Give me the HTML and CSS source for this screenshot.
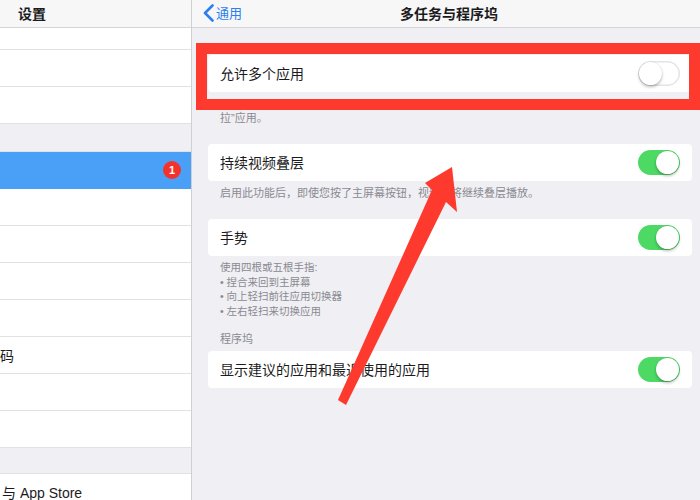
FILE: index.html
```
<!DOCTYPE html>
<html lang="zh-CN">
<head>
<meta charset="utf-8">
<title>多任务与程序坞</title>
<link rel="stylesheet" href="styles.css">
</head>
<body>
<div class="app">
  <aside class="sidebar">
    <div class="nav-header"><span class="nav-title">设置</span></div>
    <div class="row row-short"></div>
    <div class="row"></div>
    <div class="row"></div>
    <div class="group-gap"></div>
    <div class="row selected"><span class="badge">1</span></div>
    <div class="row"></div>
    <div class="row"></div>
    <div class="row"></div>
    <div class="row"></div>
    <div class="row"><span class="row-label row-label-cut">码</span></div>
    <div class="row"></div>
    <div class="row"></div>
    <div class="group-gap group-gap-last"></div>
    <div class="row"><span class="row-label">与 App Store</span></div>
  </aside>

  <main class="detail">
    <header class="detail-header">
      <a class="back">
        <svg class="chevron" width="11" height="18" viewBox="0 0 11 18"><path d="M9.5 1.5 L2 9 L9.5 16.5" fill="none" stroke="#2d7ff0" stroke-width="2.6" stroke-linecap="round" stroke-linejoin="round"/></svg>
        <span>通用</span>
      </a>
      <h1 class="detail-title">多任务与程序坞</h1>
      <span></span>
    </header>

    <section class="content">
      <div class="card card-first">
        <span class="card-label">允许多个应用</span>
        <span class="toggle"></span>
      </div>
      <p class="footer footer-first">拉”应用。</p>

      <div class="card">
        <span class="card-label">持续视频叠层</span>
        <span class="toggle on"></span>
      </div>
      <p class="footer">启用此功能后，即使您按了主屏幕按钮，视频也将继续叠层播放。</p>

      <div class="card">
        <span class="card-label">手势</span>
        <span class="toggle on"></span>
      </div>
      <div class="footer footer-list">
        <div>使用四根或五根手指:</div>
        <div>• 捏合来回到主屏幕</div>
        <div>• 向上轻扫前往应用切换器</div>
        <div>• 左右轻扫来切换应用</div>
      </div>

      <div class="section-title">程序坞</div>
      <div class="card">
        <span class="card-label">显示建议的应用和最近使用的应用</span>
        <span class="toggle on"></span>
      </div>
    </section>
  </main>

  <div class="highlight-box"></div>
  <svg class="arrow" width="700" height="500" viewBox="0 0 700 500">
    <polygon points="452,167 457,212 446,202 346,405 338,400 432,190 425,183" fill="#fd3a2d"/>
  </svg>
</div>
</body>
</html>
```

FILE: styles.css
```
* {
  box-sizing: border-box;
}

html, body {
  margin: 0;
  padding: 0;
}

body {
  width: 700px;
  height: 500px;
  overflow: hidden;
  font-family: "Liberation Sans", "Noto Sans CJK SC", sans-serif;
  color: #1b1b1d;
  background: #efeff4;
}

.app {
  position: relative;
  display: flex;
  width: 700px;
  height: 500px;
}

/* Sidebar */
.sidebar {
  width: 192px;
  flex: 0 0 192px;
  border-right: 1px solid #cfcfd4;
  background: #efeff4;
  display: flex;
  flex-direction: column;
}

.nav-header {
  height: 28px;
  flex: 0 0 28px;
  border-bottom: 1px solid #d6d6da;
  background: #f7f7f8;
  display: flex;
  align-items: center;
  padding-left: 18px;
  padding-bottom: 2px;
}

.nav-title {
  font-size: 14px;
  font-weight: bold;
  color: #1b1b1d;
}

.row {
  height: 37px;
  flex: 0 0 37px;
  background: #fff;
  border-bottom: 1px solid #e1e1e5;
  display: flex;
  align-items: center;
  justify-content: flex-end;
  padding-right: 10px;
}

.row-short {
  height: 22px;
  flex-basis: 22px;
}

.row-label {
  margin-right: auto;
  font-size: 14px;
  padding-left: 2px;
  padding-bottom: 1px;
  color: #1b1b1d;
}

.row-label-cut {
  padding-left: 0;
}

.group-gap {
  height: 28px;
  flex: 0 0 28px;
  border-bottom: 1px solid #e1e1e5;
}

.group-gap-last {
  height: 26px;
  flex-basis: 26px;
}

.row.selected {
  background: #4aa0f6;
  border-bottom-color: #4aa0f6;
}

.badge {
  width: 18px;
  height: 18px;
  border-radius: 50%;
  background: #f4322b;
  color: #fff;
  font-size: 11px;
  font-weight: bold;
  display: flex;
  align-items: center;
  justify-content: center;
}

/* Detail pane */
.detail {
  flex: 1;
  display: flex;
  flex-direction: column;
  background: #efeff4;
}

.detail-header {
  height: 28px;
  flex: 0 0 28px;
  background: #f7f7f8;
  border-bottom: 1px solid #d6d6da;
  display: grid;
  grid-template-columns: 1fr auto 1fr;
  align-items: center;
  padding-left: 11px;
  padding-right: 5px;
  padding-bottom: 2px;
}

.back {
  display: flex;
  align-items: center;
  gap: 2px;
  color: #2d7ff0;
  font-size: 13px;
}

.chevron {
  display: block;
}

.detail-title {
  margin: 0;
  font-size: 14px;
  font-weight: bold;
  color: #1b1b1d;
}

.content {
  padding: 27px 8px 0 16px;
}

.card {
  height: 37px;
  background: #fff;
  border-radius: 4px;
  display: flex;
  align-items: center;
  justify-content: space-between;
  padding: 0 12px 1px;
}

.card-label {
  font-size: 14px;
  color: #1b1b1d;
  padding-bottom: 1px;
}

.toggle {
  position: relative;
  width: 42px;
  height: 25px;
  border-radius: 13px;
  background: #fff;
  box-shadow: inset 0 0 0 1.5px #e4e4e8;
}

.toggle::after {
  content: "";
  position: absolute;
  top: 1px;
  left: 1px;
  width: 23px;
  height: 23px;
  border-radius: 50%;
  background: #fff;
  box-shadow: 0 2px 3px rgba(0, 0, 0, 0.25), 0 0 0 0.5px rgba(0, 0, 0, 0.08);
}

.toggle.on {
  background: #4cd964;
  box-shadow: none;
}

.toggle.on::after {
  left: 18px;
}

.footer {
  margin: 0 0 19px;
  padding: 5px 12px 0;
  font-size: 11px;
  line-height: 14px;
  color: #8a8a90;
}

.footer-first {
  padding-top: 19px;
}

.footer-list {
  padding-top: 4px;
  line-height: 14.5px;
  font-size: 10.5px;
  margin-bottom: 14px;
}

.section-title {
  padding: 0 12px;
  font-size: 11px;
  line-height: 14px;
  color: #8a8a90;
  margin-bottom: 5px;
}

/* Annotations */
.highlight-box {
  position: absolute;
  left: 196px;
  top: 43px;
  width: 504px;
  height: 67px;
  border: 11px solid #fd3a2d;
  pointer-events: none;
}

.arrow {
  position: absolute;
  left: 0;
  top: 0;
  pointer-events: none;
}
```
